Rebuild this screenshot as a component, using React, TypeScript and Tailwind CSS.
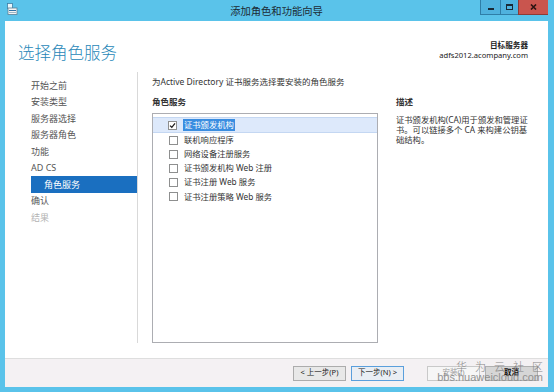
const navItems = [
  { label: "开始之前" },
  { label: "安装类型" },
  { label: "服务器选择" },
  { label: "服务器角色" },
  { label: "功能" },
  { label: "AD CS" },
  { label: "角色服务", sub: true, active: true },
  { label: "确认" },
  { label: "结果", disabled: true },
];

const services = [
  "联机响应程序",
  "网络设备注册服务",
  "证书颁发机构 Web 注册",
  "证书注册 Web 服务",
  "证书注册策略 Web 服务",
];

const Checkbox = ({ checked }: { checked?: boolean }) => (
  <span className="w-[9px] h-[9px] border border-[#8e8f8f] bg-white flex items-center justify-center shrink-0">
    {checked && (
      <svg width="7" height="7" viewBox="0 0 7 7">
        <path d="M1 3.6 L2.8 5.3 L6 1.4" fill="none" stroke="#1e1e1e" strokeWidth="1.3" />
      </svg>
    )}
  </span>
);

const WizardButton = ({
  label,
  focused,
  disabled,
  pressed,
}: {
  label: string;
  focused?: boolean;
  disabled?: boolean;
  pressed?: boolean;
}) => (
  <div
    className={
      "w-[53px] h-[15px] border flex items-center justify-center text-[7.5px] leading-none " +
      (focused
        ? "border-[#5a9fdc] bg-[#e9eef4] text-[#222]"
        : pressed
        ? "border-[#b0b0b0] bg-[#d6d6d6] text-[#111] font-bold"
        : disabled
        ? "border-[#c9c9c9] bg-[#f6f6f6] text-[#9a9a9a]"
        : "border-[#acacac] bg-[#e8e8e8] text-[#222]")
    }
  >
    {label}
  </div>
);

export default function App() {
  return (
    <div className="relative w-[554px] h-[392px] bg-[#5ac3ea] flex flex-col pl-[5px] pr-[6px] pb-[5px] font-['Noto_Sans','Noto_Sans_CJK_SC',sans-serif] text-[#333]">
      {/* title bar */}
      <div className="h-[21px] grid grid-cols-[1fr_auto_1fr]">
        <div className="flex items-start pt-[3px] pl-[2px]">
          <svg width="11" height="12" viewBox="0 0 11 12">
            <rect x="0.5" y="0.5" width="5" height="5" fill="#eaf6fb" stroke="#3f7fa5" strokeWidth="0.8" />
            <rect x="1" y="5" width="9" height="6.5" fill="#f4f4f4" stroke="#5a7f96" strokeWidth="0.8" />
            <rect x="2" y="7" width="7" height="1" fill="#2f74a8" />
            <rect x="2" y="9" width="7" height="1" fill="#9bb6c8" />
          </svg>
        </div>
        <div className="text-[10.3px] leading-[21px] text-[#1c2a33] font-['Noto_Sans_CJK_SC',sans-serif]">
          添加角色和功能向导
        </div>
        <div className="flex justify-end items-start">
          <div className="w-[20px] h-[15px] bg-[#4fb2de] border-l border-b border-[#2f7ea7] flex items-end justify-center pb-[4px]">
            <span className="w-[6px] h-[2px] bg-[#1a2a36]" />
          </div>
          <div className="w-[18px] h-[15px] bg-[#4fb2de] border-l border-b border-[#2f7ea7] flex items-center justify-center">
            <span className="w-[7px] h-[6px] border border-t-2 border-[#1a2a36]" />
          </div>
          <div className="w-[30px] h-[15px] bg-[#c9554e] border-l border-b border-[#8e3b36] flex items-center justify-center">
            <svg width="7" height="6" viewBox="0 0 7 6">
              <path d="M1 0.5 L6 5.5 M6 0.5 L1 5.5" stroke="#2a1412" strokeWidth="1.6" />
            </svg>
          </div>
        </div>
      </div>

      {/* client area */}
      <div className="flex-1 bg-white flex flex-col">
        <div className="h-[51px] flex justify-between pl-[13px] pr-[20px]">
          <div className="pt-[21px] text-[16.5px] leading-[20px] text-[#2787b8] font-['Noto_Sans_CJK_SC',sans-serif] font-light">
            选择角色服务
          </div>
          <div className="pt-[19px] text-right text-[7.6px] leading-[10px] text-[#222]">
            <div className="font-bold">目标服务器</div>
            <div>adfs2012.acompany.com</div>
          </div>
        </div>

        <div className="flex-1 flex pb-[15px]">
          <div className="w-[133px] border-r border-[#d9d9d9] pt-[5px] pl-[26px] text-[9px]">
            {navItems.map((item) => (
              <div
                key={item.label}
                className={
                  "h-[16.5px] flex items-center " +
                  (item.sub ? "pl-[13px] " : "") +
                  (item.active
                    ? "bg-[#1a6fc0] text-white"
                    : item.disabled
                    ? "text-[#b3b3b3]"
                    : "text-[#555]")
                }
              >
                {item.label}
              </div>
            ))}
          </div>

          <div className="flex-1 flex flex-col pl-[14px]">
            <div className="pt-[4px] text-[8.5px] leading-[12px] text-[#333]">
              为Active Directory 证书服务选择要安装的角色服务
            </div>
            <div className="flex-1 flex mt-[8px]">
              <div className="w-[226px] flex flex-col">
                <div className="text-[8.5px] leading-[12px] font-bold text-[#333]">角色服务</div>
                <div className="flex-1 mt-[5px] border border-[#acadb2] pt-[3px] text-[8.3px] text-[#333]">
                  <div className="h-[16px] flex items-center pl-[15px] gap-[6px] bg-[#dde9fb] border-y border-[#c4d7f2]">
                    <Checkbox checked />
                    <span className="bg-[#3a8de0] text-white px-[1px] leading-[12px]">证书颁发机构</span>
                  </div>
                  {services.map((s) => (
                    <div key={s} className="h-[14.2px] flex items-center pl-[16px] gap-[6px]">
                      <Checkbox />
                      <span>{s}</span>
                    </div>
                  ))}
                </div>
              </div>
              <div className="ml-[18px] flex flex-col">
                <div className="text-[8.5px] leading-[12px] font-bold text-[#333]">描述</div>
                <div className="mt-[7px] text-[8.3px] leading-[10px] text-[#333]">
                  <div>证书颁发机构(CA)用于颁发和管理证</div>
                  <div>书。可以链接多个 CA 来构建公钥基</div>
                  <div>础结构。</div>
                </div>
              </div>
            </div>
          </div>
        </div>

        <div className="h-[29px] border-t border-[#dedede] bg-[#f4f1f3] flex items-center justify-end pr-[10px]">
          <div className="flex gap-[5px]">
            <WizardButton label="< 上一步(P)" />
            <WizardButton label="下一步(N) >" focused />
          </div>
          <div className="flex gap-[5px] ml-[23px]">
            <WizardButton label="安装(I)" disabled />
            <WizardButton label="取消" pressed />
          </div>
        </div>
      </div>

      {/* watermark */}
      <div className="absolute right-[11px] bottom-[9px] flex flex-col items-end text-[#7d7d7d] opacity-90 pointer-events-none">
        <div className="flex gap-[8px] text-[11px] leading-[12px] font-['Noto_Sans_CJK_SC',sans-serif] font-light">
          <span>华</span>
          <span>为</span>
          <span>云</span>
          <span>社</span>
          <span>区</span>
        </div>
        <div className="text-[11px] leading-[11px] font-['Liberation_Sans',sans-serif] text-[#8a8a8a]">
          bbs.huaweicloud.com
        </div>
      </div>
    </div>
  );
}
